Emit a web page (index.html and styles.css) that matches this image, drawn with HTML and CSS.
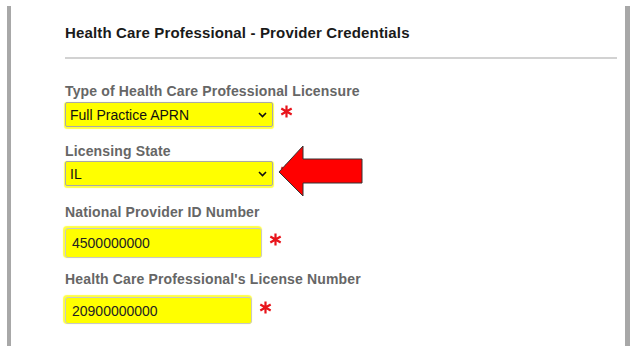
FILE: index.html
```html
<!DOCTYPE html>
<html lang="en">
<head>
  <meta charset="UTF-8">
  <title>Provider Credentials</title>
  <meta name="viewport" content="width=device-width, initial-scale=1.0">
  <link rel="stylesheet" href="styles.css">
</head>
<body>
  <div class="frame">
    <h2>Health Care Professional - Provider Credentials</h2>
    <div class="rule"></div>

    <div class="field f-type">
      <label>Type of Health Care Professional Licensure</label>
      <div class="row">
        <div class="select">
          <span>Full Practice APRN</span>
          <svg width="9" height="6" viewBox="0 0 9 6"><path d="M1 1 L4.5 4.5 L8 1" fill="none" stroke="#111" stroke-width="1.6"/></svg>
        </div>
        <svg class="req" width="13" height="13" viewBox="0 0 13 13"><path d="M6.5 0.5 V12.5 M1.3 3.5 L11.7 9.5 M1.3 9.5 L11.7 3.5" stroke="#e8141b" stroke-width="2.2"/></svg>
      </div>
    </div>

    <div class="field f-state">
      <label>Licensing State</label>
      <div class="row">
        <div class="select">
          <span>IL</span>
          <svg width="9" height="6" viewBox="0 0 9 6"><path d="M1 1 L4.5 4.5 L8 1" fill="none" stroke="#111" stroke-width="1.6"/></svg>
        </div>
        <svg class="req" width="13" height="13" viewBox="0 0 13 13"><path d="M6.5 0.5 V12.5 M1.3 3.5 L11.7 9.5 M1.3 9.5 L11.7 3.5" stroke="#e8141b" stroke-width="2.2"/></svg>
      </div>
      <svg class="arrow" width="88" height="60" viewBox="0 0 88 60">
        <polygon points="1,32 25,6 25,19 84,19 84,43 25,43 25,56" fill="#ff0000" stroke="#333" stroke-width="1"/>
      </svg>
    </div>

    <div class="field f-npi">
      <label>National Provider ID Number</label>
      <div class="row">
        <div class="input npi">4500000000</div>
        <svg class="req" width="13" height="13" viewBox="0 0 13 13"><path d="M6.5 0.5 V12.5 M1.3 3.5 L11.7 9.5 M1.3 9.5 L11.7 3.5" stroke="#e8141b" stroke-width="2.2"/></svg>
      </div>
    </div>

    <div class="field f-lic">
      <label>Health Care Professional's License Number</label>
      <div class="row">
        <div class="input lic">20900000000</div>
        <svg class="req" width="13" height="13" viewBox="0 0 13 13"><path d="M6.5 0.5 V12.5 M1.3 3.5 L11.7 9.5 M1.3 9.5 L11.7 3.5" stroke="#e8141b" stroke-width="2.2"/></svg>
      </div>
    </div>
  </div>
</body>
</html>
```

FILE: styles.css
```css
body {
  margin: 0;
  background: #fff;
  font-family: 'Liberation Sans', Arial, sans-serif;
  overflow: hidden;
}
.frame {
  margin: 6px 0 0 7px;
  width: 623px;
  height: 340px;
  box-sizing: border-box;
  border-left: 4px solid #a8a8a8;
  border-right: 5px solid #a8a8a8;
  padding: 18px 0 0 54px;
}
h2 {
  margin: 0;
  font-size: 15px;
  line-height: 17px;
  font-weight: bold;
  letter-spacing: 0.15px;
  color: #1a1a1a;
}
.rule {
  margin-top: 16px;
  width: 552px;
  height: 2px;
  background: #d2d2d2;
}
.field {
  position: relative;
}
.field label {
  display: block;
  font-size: 14px;
  line-height: 16px;
  font-weight: bold;
  letter-spacing: 0.15px;
  color: #666;
}
.row {
  display: flex;
  align-items: center;
}
.f-type { margin-top: 24px; }
.f-type .row { margin-top: 3px; }
.f-state { margin-top: 16px; }
.f-state .row { margin-top: 2px; }
.f-npi { margin-top: 18px; }
.f-npi .row { margin-top: 8px; }
.f-lic { margin-top: 13px; }
.f-lic .row { margin-top: 10px; }

.select {
  width: 208px;
  height: 25px;
  box-sizing: border-box;
  border: 1px solid #a9a9a9;
  border-radius: 2px;
  background: #ffff00;
  display: flex;
  align-items: center;
  justify-content: space-between;
  padding: 0 5px 0 4px;
  font-size: 14px;
  color: #111;
  box-shadow: 0 1px 1px 1px #ffff40;
}
.input {
  height: 30px;
  box-sizing: border-box;
  border: 1px solid #c8c8c8;
  border-radius: 3px;
  background: #ffff00;
  display: flex;
  align-items: center;
  padding-left: 6px;
  font-size: 14px;
  color: #222;
  box-shadow: -1px -1px 1px 1px #ffff40;
}
.npi { width: 197px; }
.lic { width: 187px; height: 27px; }
.req {
  margin-left: 7px;
  margin-top: -7px;
}
.arrow {
  position: absolute;
  left: 213px;
  top: -3px;
}
```
